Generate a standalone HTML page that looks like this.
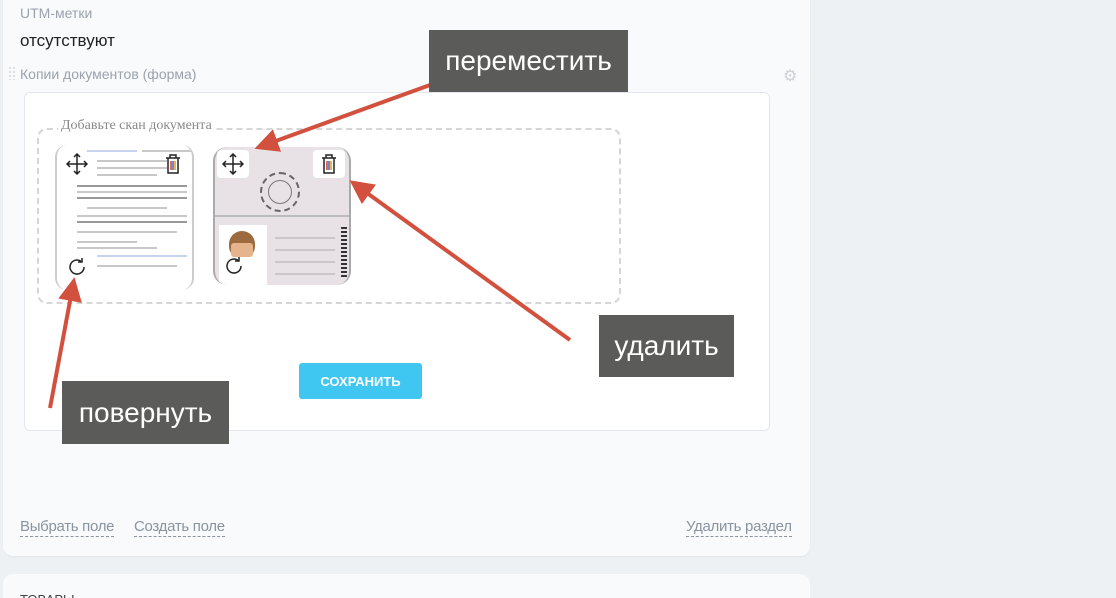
<!DOCTYPE html>
<html style="height:598px;overflow:hidden"><head><meta charset="utf-8">
<style>
*{box-sizing:border-box;margin:0;padding:0}
body{width:1116px;height:598px;overflow:hidden;background:#eef1f4;font-family:"Liberation Sans",sans-serif;position:relative}
.panel{position:absolute;left:3px;top:-10px;width:807px;height:566px;background:#f9fafb;border-radius:10px;box-shadow:0 1px 2px rgba(0,0,0,.05)}
.panel2{position:absolute;left:3px;top:574px;width:807px;height:24px;background:#f9fafb;border-radius:10px 10px 0 0}
.t{position:absolute;white-space:nowrap}
.card{position:absolute;left:24px;top:92px;width:746px;height:339px;background:#fff;border:1px solid #e3e7ec;border-radius:6px}
.drop{position:absolute;left:37px;top:128px;width:584px;height:176px;border:2px dashed #d6d6d6;border-radius:10px}
.ic{position:absolute;width:32px;height:28px;background:#fff;border-radius:4px;display:flex;align-items:center;justify-content:center}
.lnk{position:absolute;top:518px;font-size:15px;color:#8a94a0;border-bottom:1px dashed #8a94a0;line-height:18px;letter-spacing:-0.3px}
.lab{position:absolute;background:#5b5b59;color:#fff;font-size:28px;display:flex;align-items:center;justify-content:center;font-family:"Liberation Sans",sans-serif}
.ln{position:absolute;height:2px;background:#c8c8c8}
</style></head><body>
<div class="panel"></div>
<div class="panel2"></div>
<div class="t" style="left:20px;top:5px;font-size:14px;color:#9aa3ad">UTM-метки</div>
<div class="t" style="left:20px;top:31px;font-size:17px;color:#222">отсутствуют</div>
<div class="t" style="left:8px;top:66px;width:8px;height:14px;background:radial-gradient(#d8dde2 1px,transparent 1.2px) 0 0/4px 4px"></div>
<div class="t" style="left:20px;top:66px;font-size:14px;color:#9aa3ad">Копии документов (форма)</div>
<div class="t" style="left:783px;top:66px;font-size:16px;color:#ccd1d6">⚙</div>
<div class="card"></div>
<div class="drop"></div>
<div class="t" style="left:58px;top:118px;font-size:14px;color:#888;background:#fff;padding:0 3px;font-family:'Liberation Serif',serif">Добавьте скан документа</div>
<div style="position:absolute;left:55px;top:145px;width:139px;height:145px;background:#fff;border-left:2px solid #ccc;border-right:2px solid #ccc;border-radius:12px;overflow:hidden">
 <div class="ln" style="left:30px;top:5px;width:50px;background:#c8d4ef"></div><div class="ln" style="left:85px;top:5px;width:50px"></div>
 <div class="ln" style="left:40px;top:15px;width:70px"></div><div class="ln" style="left:40px;top:22px;width:70px"></div><div class="ln" style="left:40px;top:29px;width:60px"></div>
 <div class="ln" style="left:20px;top:40px;width:110px;background:#999"></div><div class="ln" style="left:20px;top:46px;width:110px"></div><div class="ln" style="left:20px;top:52px;width:110px;background:#999"></div>
 <div class="ln" style="left:30px;top:62px;width:80px"></div><div class="ln" style="left:20px;top:70px;width:110px"></div><div class="ln" style="left:20px;top:76px;width:110px;background:#999"></div>
 <div class="ln" style="left:20px;top:86px;width:100px"></div><div class="ln" style="left:20px;top:96px;width:60px"></div><div class="ln" style="left:20px;top:102px;width:80px"></div>
 <div class="ln" style="left:40px;top:110px;width:90px;background:#c8d4ef"></div><div class="ln" style="left:40px;top:120px;width:80px"></div>
</div>
<div style="position:absolute;left:213px;top:147px;width:138px;height:138px;background:#e8e2e6;border-radius:14px;overflow:hidden;border-left:2px solid #aaa;border-right:2px solid #aaa">
 <div style="position:absolute;left:45px;top:25px;width:40px;height:40px;border:2px dashed #666;border-radius:50%"></div>
 <div style="position:absolute;left:53px;top:33px;width:24px;height:24px;border:1px solid #777;border-radius:50%"></div>
 <div style="position:absolute;left:0;top:68px;width:138px;height:2px;background:#bbb"></div>
 <div style="position:absolute;left:4px;top:78px;width:48px;height:60px;background:#fff"></div>
 <div style="position:absolute;left:14px;top:84px;width:26px;height:26px;background:#9b6a3e;border-radius:50% 50% 40% 40%"></div>
 <div style="position:absolute;left:16px;top:96px;width:22px;height:14px;background:#e6b48c;border-radius:3px"></div>
 <div style="position:absolute;left:126px;top:80px;width:6px;height:52px;background:repeating-linear-gradient(#333 0 2px,#e8e2e6 2px 4px)"></div>
 <div class="ln" style="left:60px;top:90px;width:60px"></div><div class="ln" style="left:60px;top:102px;width:60px"></div><div class="ln" style="left:60px;top:114px;width:60px"></div><div class="ln" style="left:60px;top:126px;width:60px"></div>
</div>
<svg style="position:absolute;left:66px;top:153px" width="22" height="22" viewBox="0 0 22 22" fill="none" stroke="#222" stroke-width="1.5"><path d="M11 1v20M1 11h20M8 4l3-3 3 3M8 18l3 3 3-3M4 8l-3 3 3 3M18 8l3 3-3 3"/></svg>
<svg style="position:absolute;left:165px;top:154px" width="16" height="20" viewBox="0 0 16 20" fill="none" stroke="#222" stroke-width="1.5"><path d="M1 4h14M5 4V1h6v3M3 4v15h10V4"/><path d="M6 7v9" stroke="#d33"/><path d="M8 7v9" stroke="#36c"/><path d="M10 7v9" stroke="#e90"/></svg>
<svg style="position:absolute;left:67px;top:257px" width="20" height="20" viewBox="0 0 20 20" fill="none" stroke="#222" stroke-width="1.5"><path d="M17 10a7 7 0 1 1-3-5.7"/><path d="M15 1v4h-4"/></svg>
<div class="ic" style="left:217px;top:150px"><svg width="22" height="22" viewBox="0 0 22 22" fill="none" stroke="#222" stroke-width="1.5"><path d="M11 1v20M1 11h20M8 4l3-3 3 3M8 18l3 3 3-3M4 8l-3 3 3 3M18 8l3 3-3 3"/></svg></div>
<div class="ic" style="left:313px;top:150px"><svg width="16" height="20" viewBox="0 0 16 20" fill="none" stroke="#222" stroke-width="1.5"><path d="M1 4h14M5 4V1h6v3M3 4v15h10V4"/><path d="M6 7v9" stroke="#d33"/><path d="M8 7v9" stroke="#36c"/><path d="M10 7v9" stroke="#e90"/></svg></div>
<div class="ic" style="left:218px;top:252px;background:transparent"><svg width="20" height="20" viewBox="0 0 20 20" fill="none" stroke="#222" stroke-width="1.5"><path d="M17 10a7 7 0 1 1-3-5.7"/><path d="M15 1v4h-4"/></svg></div>
<div class="t" style="left:299px;top:363px;width:123px;height:36px;background:#3fc7f2;border-radius:3px;color:#fff;font-size:13px;font-weight:bold;display:flex;align-items:center;justify-content:center">СОХРАНИТЬ</div>
<div class="lnk" style="left:20px">Выбрать поле</div>
<div class="lnk" style="left:134px">Создать поле</div>
<div class="lnk" style="left:686px">Удалить раздел</div>
<div class="t" style="left:20px;top:592px;font-size:13px;color:#444">ТОВАРЫ</div>
<svg style="position:absolute;left:0;top:0" width="1116" height="598">
<defs><marker id="a" markerWidth="6" markerHeight="6" refX="4" refY="3" orient="auto"><path d="M0 0L6 3L0 6z" fill="#d1503e"/></marker></defs>
<g stroke="#d1503e" stroke-width="4" marker-end="url(#a)"><line x1="430" y1="85" x2="262" y2="146"/><line x1="570" y1="340" x2="356" y2="185"/><line x1="50" y1="408" x2="73" y2="285"/></g>
</svg>
<div class="lab" style="left:429px;top:30px;width:199px;height:62px">переместить</div>
<div class="lab" style="left:599px;top:315px;width:135px;height:62px">удалить</div>
<div class="lab" style="left:62px;top:381px;width:167px;height:63px">повернуть</div>
</body></html>
